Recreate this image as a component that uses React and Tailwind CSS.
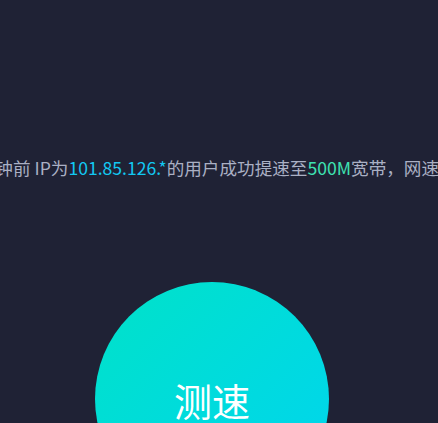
import React from 'react';

const SpeedTest = () => {
  return (
    <div
      className="min-h-screen w-full overflow-hidden bg-[#1f2235]"
      style={{ fontFamily: '"Noto Sans CJK SC", "Noto Sans", sans-serif' }}
    >
      {/* 滚动播报 */}
      <div className="pt-[156px] overflow-hidden">
        <p className="ml-[-32px] whitespace-nowrap text-[17.6px] leading-[24px] text-[#aab0c4]">
          1分钟前 IP为<span className="text-[#12c8f2]">101.85.126.*</span>的用户成功提速至
          <span className="text-[#3ee2b2]">500M</span>宽带，网速提升10倍
        </p>
      </div>

      <div className="mt-[102px] flex justify-center">
        <button className="ml-[-14px] flex h-[234px] w-[234px] items-center justify-center rounded-full bg-gradient-to-br from-[#00e2c8] to-[#00d4f0] text-[38px] text-white">
          测速
        </button>
      </div>
    </div>
  );
};

export default function App() {
  return <SpeedTest />;
}
